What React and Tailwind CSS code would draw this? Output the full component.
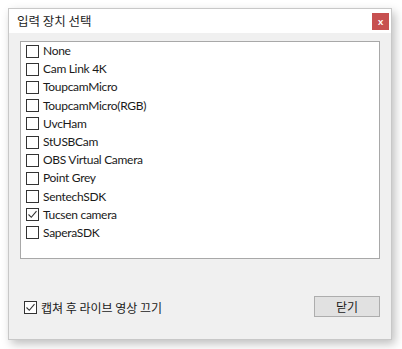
import { useState } from "react";

const devices = [
  "None",
  "Cam Link 4K",
  "ToupcamMicro",
  "ToupcamMicro(RGB)",
  "UvcHam",
  "StUSBCam",
  "OBS Virtual Camera",
  "Point Grey",
  "SentechSDK",
  "Tucsen camera",
  "SaperaSDK",
];

const CheckBox = ({ checked, onClick }) => (
  <span
    onClick={onClick}
    className="w-[13px] h-[13px] border border-[#333333] bg-white flex items-center justify-center shrink-0"
  >
    {checked && (
      <svg width="11" height="11" viewBox="0 0 11 11">
        <path d="M1.5 5.5 L4.3 8.3 L9.5 2.2" fill="none" stroke="#333333" strokeWidth="1.1" />
      </svg>
    )}
  </span>
);

export default function App() {
  const [selected, setSelected] = useState({ "Tucsen camera": true });
  const [liveOff, setLiveOff] = useState(true);

  return (
    <div
      className="w-[402px] h-[349px] bg-white pt-[8px] pl-[8px]"
      style={{ fontFamily: 'Lato, "Noto Sans CJK KR", sans-serif' }}
    >
      <div className="w-[384px] h-[332px] flex flex-col bg-[#f0f0f0] border border-[#c8c8c8] shadow-[3px_4px_9px_rgba(0,0,0,0.25)]">
        <div className="h-[24px] bg-white flex items-center justify-between pl-[8px] pr-[2px] shrink-0">
          <span className="text-[12.5px] text-[#222222] leading-none" style={{ fontFamily: '"Noto Sans CJK KR", sans-serif' }}>
            입력 장치 선택
          </span>
          <button className="w-[17px] h-[17px] bg-[#c75050] text-white text-[10px] font-bold flex items-center justify-center leading-none">
            x
          </button>
        </div>
        <div className="flex-1 flex flex-col px-[11px] pt-[8px] pb-[22px]">
          <div className="h-[218px] bg-white border border-[#a8a8a8] pl-[5px] flex flex-col">
            {devices.map((d) => (
              <div key={d} className="h-[18.2px] flex items-center gap-[4px]">
                <CheckBox
                  checked={!!selected[d]}
                  onClick={() => setSelected({ ...selected, [d]: !selected[d] })}
                />
                <span className="text-[12px] tracking-[-0.3px] text-[#1a1a1a] leading-none">{d}</span>
              </div>
            ))}
          </div>
          <div className="flex-1 flex items-end justify-between pl-[4px]">
            <div className="flex items-center gap-[4px] mb-[3px]">
              <CheckBox checked={liveOff} onClick={() => setLiveOff(!liveOff)} />
              <span className="text-[12px] text-[#1a1a1a] leading-none" style={{ fontFamily: '"Noto Sans CJK KR", sans-serif' }}>
                캡쳐 후 라이브 영상 끄기
              </span>
            </div>
            <button className="w-[66px] h-[21px] bg-[#e1e1e1] border border-[#adadad] text-[12px] text-[#1a1a1a] flex items-center justify-center leading-none" style={{ fontFamily: '"Noto Sans CJK KR", sans-serif' }}>
              닫기
            </button>
          </div>
        </div>
      </div>
    </div>
  );
}
